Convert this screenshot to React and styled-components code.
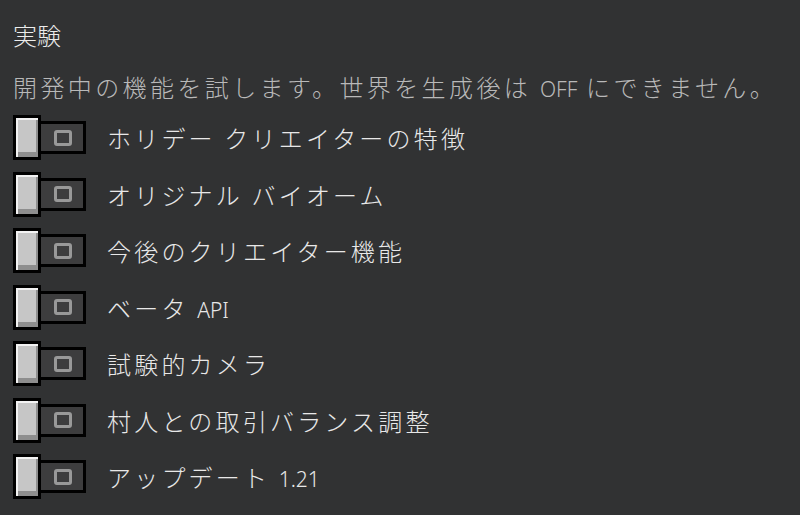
import React from 'react';
import styled, { createGlobalStyle } from 'styled-components';

const GlobalStyle = createGlobalStyle`
  html, body {
    margin: 0;
    padding: 0;
    background: #313233;
  }
  body {
    font-family: "Noto Sans", "Noto Sans CJK JP", sans-serif;
  }
`;

const features = [
    { label: 'ホリデー クリエイターの特徴' },
    { label: 'オリジナル バイオーム' },
    { label: '今後のクリエイター機能' },
    { label: 'ベータ', latin: 'API' },
    { label: '試験的カメラ' },
    { label: '村人との取引バランス調整' },
    { label: 'アップデート', latin: '1.21' },
];

const App = () => {
    return (
        <>
            <GlobalStyle />
            <Panel>
                <Title>実験</Title>
                <Description>
                    開発中の機能を試します。世界を生成後は <Latin>OFF</Latin> にできません。
                </Description>
                <List>
                    {features.map((f) => (
                        <Row key={f.label}>
                            <Toggle>
                                <Knob />
                                <Track>
                                    <OffMark />
                                </Track>
                            </Toggle>
                            <Label>
                                {f.label}
                                {f.latin && <> <Latin>{f.latin}</Latin></>}
                            </Label>
                        </Row>
                    ))}
                </List>
            </Panel>
        </>
    );
};

export default App;

const Panel = styled.div`
    width: 800px;
    height: 515px;
    box-sizing: border-box;
    padding: 19px 0 0 13px;
    background: #313233;
    overflow: hidden;
`;

const Title = styled.div`
    font-family: "Noto Sans CJK JP", sans-serif;
    font-weight: 300;
    font-size: 24px;
    line-height: 32px;
    color: #ececec;
`;

const Description = styled.div`
    margin-top: 20px;
    font-family: "Noto Sans CJK JP", sans-serif;
    font-weight: 300;
    font-size: 24px;
    line-height: 32px;
    letter-spacing: 3.4px;
    color: #b9b9b9;
    white-space: nowrap;
`;

const Latin = styled.span`
    font-family: "Noto Sans", sans-serif;
    font-size: 21px;
    letter-spacing: 0;
`;

const List = styled.div`
    margin-top: 10px;
    display: flex;
    flex-direction: column;
    gap: 11.5px;
`;

const Row = styled.div`
    display: flex;
    align-items: center;
    height: 45px;
`;

const Toggle = styled.div`
    display: flex;
    align-items: center;
    height: 45px;
`;

const Knob = styled.div`
    position: relative;
    z-index: 1;
    width: 22px;
    height: 39px;
    border: 3px solid #000;
    background: #c6c6c6;
    box-shadow: inset 2px 2px 0 #f2f2f2, inset -2px -5px 0 #8e8e8e;
`;

const Track = styled.div`
    width: 40px;
    height: 27px;
    margin-left: -3px;
    border: 3px solid #000;
    background: #3d3d3e;
    display: flex;
    align-items: center;
    justify-content: center;
    padding-left: 2px;
`;

const OffMark = styled.div`
    width: 12px;
    height: 10px;
    border: 3px solid #999;
    border-radius: 3px;
`;

const Label = styled.div`
    margin-left: 21px;
    font-family: "Noto Sans CJK JP", sans-serif;
    font-weight: 300;
    font-size: 24px;
    letter-spacing: 3.2px;
    color: #e8e8e8;
    white-space: nowrap;
`;
